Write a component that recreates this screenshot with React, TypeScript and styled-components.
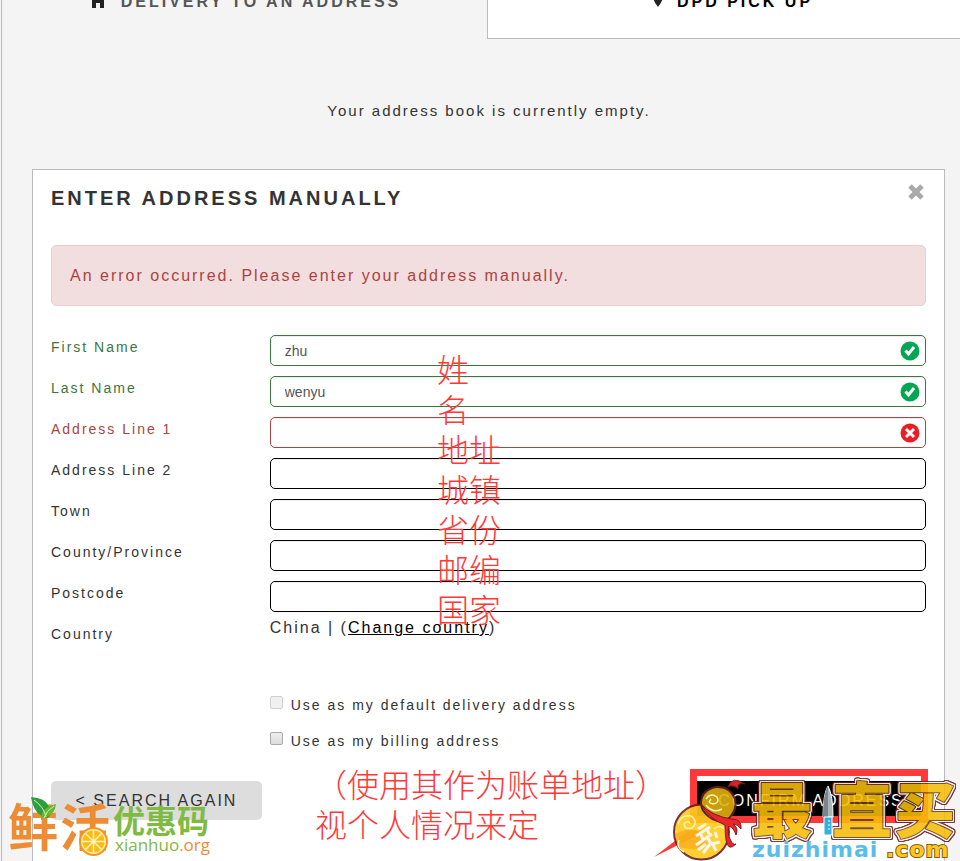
import React from "react";
import styled, { createGlobalStyle } from "styled-components";

const GlobalStyle = createGlobalStyle`
  *, *::before, *::after { box-sizing: border-box; }
  body {
    margin: 0;
    background: #f4f4f4;
    color: #333;
    font-family: "Liberation Sans", Arial, "Noto Sans CJK SC", sans-serif;
    letter-spacing: 2px;
  }
`;

const Page = styled.div`
  position: relative;
  display: flex;
  flex-direction: column;
  min-height: 100vh;
  overflow: hidden;
  margin-left: 1px;
  border-left: 1px solid #bbb;
`;

const Tabs = styled.nav`
  display: grid;
  grid-template-columns: 485fr 473fr;
  height: 39px;
`;

const Tab = styled.button<{ $active?: boolean }>`
  display: flex;
  align-items: flex-end;
  justify-content: center;
  gap: 14px;
  height: 39px;
  padding: 0 0 24px ${(p) => (p.$active ? "0" : "18px")};
  border: 0 solid ${(p) => (p.$active ? "transparent" : "#bbb")};
  border-width: 0 0 1px 1px;
  background: ${(p) => (p.$active ? "#f4f4f4" : "#fff")};
  color: ${(p) => (p.$active ? "#555" : "#000")};
  font: bold 16px/24px "Liberation Sans", Arial, sans-serif;
  letter-spacing: 3px;
  white-space: nowrap;

  svg {
    flex: none;
    margin-bottom: 6px;
  }
`;

const Notice = styled.p`
  margin: 60px 0 0;
  padding-left: 16px;
  text-align: center;
  font-size: 15px;
  line-height: 24px;
`;

const Panel = styled.form`
  position: relative;
  flex: 1;
  margin: 46px 15px 0 30px;
  padding: 0 18px 41px;
  border: 1px solid #bbb;
  border-bottom: 0;
  background: #fff;
`;

const PanelHead = styled.header`
  display: flex;
  justify-content: space-between;
  height: 75px;
`;

const Title = styled.h2`
  margin: 16px 0 0;
  font-size: 20px;
  line-height: 24px;
  letter-spacing: 3px;
`;

const CloseButton = styled.button`
  width: 20px;
  height: 20px;
  margin-top: 12px;
  padding: 0;
  border: 0;
  background: none;
`;

const Alert = styled.div`
  padding: 18px;
  border: 1px solid #ebccd1;
  border-radius: 5px;
  background: #f2dede;
  color: #a94442;
  font-size: 16px;
  line-height: 23px;
`;

const tones = { ok: "#3c763d", bad: "#a94442", plain: "#000" };
type Tone = keyof typeof tones;

const Fields = styled.div`
  display: flex;
  flex-direction: column;
  gap: 10px;
  margin-top: 29px;
`;

const Row = styled.div`
  display: grid;
  grid-template-columns: 1fr 3fr;
  height: 31px;
`;

const Label = styled.label<{ $tone: Tone }>`
  color: ${(p) => (p.$tone === "plain" ? "#333" : tones[p.$tone])};
  font-size: 14px;
  line-height: 24px;
`;

const Control = styled.div`
  position: relative;
`;

const Input = styled.input<{ $tone: Tone }>`
  display: block;
  width: 100%;
  height: 31px;
  padding: 0 40px 0 14px;
  border: 1px solid ${(p) => tones[p.$tone]};
  border-radius: 5px;
  box-shadow: inset 0 1px 1px rgba(0, 0, 0, 0.075);
  background: #fff;
  color: #555;
  font: 14px "Liberation Sans", Arial, sans-serif;
`;

const Status = styled.svg`
  position: absolute;
  top: 6px;
  right: 6px;
`;

const Country = styled.div`
  margin-top: -6px;
  font-size: 16px;
  line-height: 24px;
  a { color: #000; }
`;

const Options = styled.div`
  display: flex;
  flex-direction: column;
  gap: 12px;
  margin: 40px 0 0 25%;
`;

const Option = styled.label`
  display: flex;
  gap: 8px;
  font-size: 14px;
  line-height: 24px;
`;

const CheckBox = styled.input`
  appearance: none;
  width: 13px;
  height: 13px;
  margin: 3px 0 0;
  border: 1px solid #aaa;
  border-radius: 2px;
  background: linear-gradient(#eee, #ddd);
  &:disabled { border-color: #d0d0d0; background: #f0f0f0; }
`;

const Actions = styled.div`
  display: flex;
  align-items: flex-start;
  justify-content: space-between;
  margin-top: 28px;
`;

const Action = styled.button<{ $primary?: boolean }>`
  width: ${(p) => (p.$primary ? "230px" : "211px")};
  height: 39px;
  padding: 0;
  border: 0;
  border-radius: ${(p) => (p.$primary ? "0" : "5px")};
  background: ${(p) => (p.$primary ? "#000" : "#ddd")};
  color: ${(p) => (p.$primary ? "#fff" : "#333")};
  font: 16px "Liberation Sans", Arial, sans-serif;
  letter-spacing: 2px;
`;

const Highlight = styled.div`
  position: absolute;
  right: 16px;
  top: 599px;
  width: 238px;
  height: 54px;
  border: 7px solid #ff3939;
`;

const Note = styled.div`
  position: absolute;
  color: #ff3939;
  font-family: "Noto Sans CJK SC", sans-serif;
  font-size: 32px;
  font-weight: 300;
  line-height: 40px;
  letter-spacing: 0;
  white-space: pre;
  pointer-events: none;
`;

const FieldNote = styled(Note)`
  left: 404px;
  top: 178px;
`;

const BillingNote = styled(Note)`
  left: 282px;
  top: 593px;
`;

const Watermark = styled.svg<{ $side: "left" | "right" }>`
  position: absolute;
  bottom: 0;
  ${(p) => p.$side}: 0;
  pointer-events: none;
  letter-spacing: 0;
`;

const OutlinedName = styled.g`
  font: 900 60px "Noto Sans CJK SC", sans-serif;
  fill: #f6bd08;
  stroke: #6b3a14;
  stroke-width: 2px;
  stroke-linejoin: round;
  paint-order: stroke;
  opacity: 0.88;
  filter: drop-shadow(1px 0 #fff) drop-shadow(-1px 0 #fff) drop-shadow(0 1px #fff)
    drop-shadow(0 -1px #fff) drop-shadow(1px 0 #6b1d24) drop-shadow(-1px 0 #6b1d24)
    drop-shadow(0 1px #6b1d24) drop-shadow(0 -1px #6b1d24);
`;

const fields: { id: string; label: string; value?: string; tone: Tone }[] = [
  { id: "first", label: "First Name", value: "zhu", tone: "ok" },
  { id: "last", label: "Last Name", value: "wenyu", tone: "ok" },
  { id: "line1", label: "Address Line 1", tone: "bad" },
  { id: "line2", label: "Address Line 2", tone: "plain" },
  { id: "town", label: "Town", tone: "plain" },
  { id: "county", label: "County/Province", tone: "plain" },
  { id: "postcode", label: "Postcode", tone: "plain" },
];

function StatusIcon({ tone }: { tone: Tone }) {
  return (
    <Status width="20" height="20" viewBox="0 0 20 20" fill="none" stroke="#fff" aria-hidden="true">
      <circle cx="10" cy="10" r="9.5" fill={tone === "ok" ? "#00a651" : "#ed1c24"} stroke="none" />
      <path d={tone === "ok" ? "M5.5 9.5l3 3.5 5.5-7" : "M6 6l8 8M14 6l-8 8"} strokeWidth="3" />
    </Status>
  );
}

function XianhuoMark() {
  return (
    <Watermark $side="left" width="213" height="71" viewBox="2 790 213 71" role="img" aria-label="xianhuo.org">
      <g fontFamily='"Noto Sans CJK SC", sans-serif' fontWeight="700">
        <text x="8" y="846" fontSize="50" fill="#ee8c35">鲜</text>
        <text x="60" y="846" fontSize="50" fill="#ee8c35">活</text>
        <text x="113" y="833" fontSize="32" fill="#7fba42">优惠码</text>
      </g>
      <path d="M31 797q14 1 18 9 4 7-1 12-14-2-17-21z" fill="#2f9e3f" />
      <path d="M41 820q0-13 15-16-1 10-10 13z" fill="#68b52f" />
      <path d="M34 800q10 7 12 17M54 806q-8 5-10 12" stroke="#d8f0b8" fill="none" />
      <circle cx="93.5" cy="841.5" r="14.5" fill="#f7941d" />
      <circle cx="93.5" cy="841.5" r="12.5" fill="#fff0a8" />
      <circle cx="93.5" cy="841.5" r="11" fill="#fdbb14" />
      <path d="M93.5 830v23M82 841.5h23M85.5 833.5l16 16M101.5 833.5l-16 16" stroke="#fff3b8" strokeWidth="1.5" />
      <text x="115" y="851" fontSize="17" fontFamily='"Open Sans", sans-serif' fill="#7fba42">
        xianhuo<tspan fill="#ee8c35">.org</tspan>
      </text>
    </Watermark>
  );
}

function ZuizhimaiMark() {
  return (
    <Watermark $side="right" width="310" height="96" viewBox="650 765 310 96" role="img" aria-label="zuizhimai.com">
      <path d="M654 857l34-26 22-2z" fill="#ff3939" />
      <g opacity="0.9" stroke="#6b1d24" strokeWidth="2">
        <circle cx="701.5" cy="832" r="27.5" fill="#ffcb1c" />
        <path d="M701 802q1-12 15-15 14-1 19 12 3 12-9 22-13 2-21-8-4-4-4-11z" fill="#deb010" />
        <path d="M728 787q4-12 17-3-8-2-7 5-5-5-10-2z" fill="#e8262c" strokeWidth="1" />
      </g>
      <path d="M676 834q12-8 24-2l8 13q-14 8-31 1z" fill="#f79a12" opacity="0.5" />
      <g fill="none" stroke="#fff3b0" strokeWidth="1.5">
        <path d="M706 799q5-7 11-2 3 6-4 7-6-1-2-5M678 824q3-10 13-8 8 6 1 12-8 2-8-4 3-4 6-1M714 829q7-6 12 2M706 805q7 9 16 4M679 840q-3 8 5 12" />
      </g>
      <path d="M701 804q10 12 31 15 10 0 9 10-3-5-8-5 6 4 3 11-2-7-7-9-2 8 1 13 3 7 6 5-8 8-10-4-1-8-1-15-16-6-24-21z" fill="#e8262c" stroke="#83151d" strokeWidth="1" />
      <path d="M698 829l8-5M696 836l14-9M700 832l3 8M707 828l2 6M696 845l16-11M707 836l4 8 9-2M711 843l-8 10M712 842l4 9M698 850l8-6M715 832l2 6" stroke="#fff6e8" strokeWidth="3" fill="none" />
      <OutlinedName>
        <text x="752" y="833">最</text>
        <text x="832" y="833">直</text>
        <text x="895" y="833">买</text>
      </OutlinedName>
      <path d="M828 786q5 9 5 31h-10q0-23 5-31z" fill="#a9b4bb" stroke="#fff" />
      <path d="M828 786v31h-5q0-23 5-31z" fill="#78858d" />
      <path d="M824 817h8v18h-8z" fill="#35aee2" stroke="#fff" />
      <path d="M829 820v12" stroke="#fff" strokeDasharray="2 2" />
      <g fontFamily='"DejaVu Sans", sans-serif' fontWeight="bold" fontSize="22" letterSpacing="1">
        <text x="752" y="857" fill="#5abde9">zuizhimai</text>
        <text x="886" y="857" fill="#ffc91c" stroke="#8a5a1c" strokeWidth="2" paintOrder="stroke">.com</text>
      </g>
    </Watermark>
  );
}

export default function App() {
  return (
    <>
      <GlobalStyle />
      <Page>
        <Tabs>
          <Tab $active>
            <svg width="18" height="18" viewBox="0 0 18 18" fill="#222" aria-hidden="true"><path d="M9 0L0 10h3v8h4v-5h4v5h4v-8h3z" /></svg>
            DELIVERY TO AN ADDRESS
          </Tab>
          <Tab>
            <svg width="10" height="18" viewBox="0 0 10 18" fill="#222" aria-hidden="true"><path d="M5 1a5 5 0 0 1 5 5q0 5-5 11-5-6-5-11a5 5 0 0 1 5-5z" /></svg>
            DPD PICK UP
          </Tab>
        </Tabs>
        <Notice>Your address book is currently empty.</Notice>
        <Panel>
          <PanelHead>
            <Title>ENTER ADDRESS MANUALLY</Title>
            <CloseButton type="button" aria-label="Close">
              <svg width="20" height="20" viewBox="0 0 20 20" stroke="#aaa" strokeWidth="5"><path d="M4 4l12 12M16 4L4 16" /></svg>
            </CloseButton>
          </PanelHead>
          <Alert role="alert">An error occurred. Please enter your address manually.</Alert>
          <Fields>
            {fields.map((f) => (
              <Row key={f.id}>
                <Label htmlFor={f.id} $tone={f.tone}>{f.label}</Label>
                <Control>
                  <Input id={f.id} defaultValue={f.value} $tone={f.tone} />
                  {f.tone !== "plain" && <StatusIcon tone={f.tone} />}
                </Control>
              </Row>
            ))}
            <Row>
              <Label as="span" $tone="plain">Country</Label>
              <Country>China | (<a href="#country">Change country</a>)</Country>
            </Row>
          </Fields>
          <Options>
            <Option><CheckBox type="checkbox" disabled />Use as my default delivery address</Option>
            <Option><CheckBox type="checkbox" />Use as my billing address</Option>
          </Options>
          <Actions>
            <Action type="button">&lt; SEARCH AGAIN</Action>
            <Action type="submit" $primary>CONFIRM ADDRESS</Action>
          </Actions>
          <Highlight />
          <FieldNote>{"姓\n名\n地址\n城镇\n省份\n邮编\n国家"}</FieldNote>
          <BillingNote>{"（使用其作为账单地址）\n视个人情况来定"}</BillingNote>
        </Panel>
        <XianhuoMark />
        <ZuizhimaiMark />
      </Page>
    </>
  );
}
